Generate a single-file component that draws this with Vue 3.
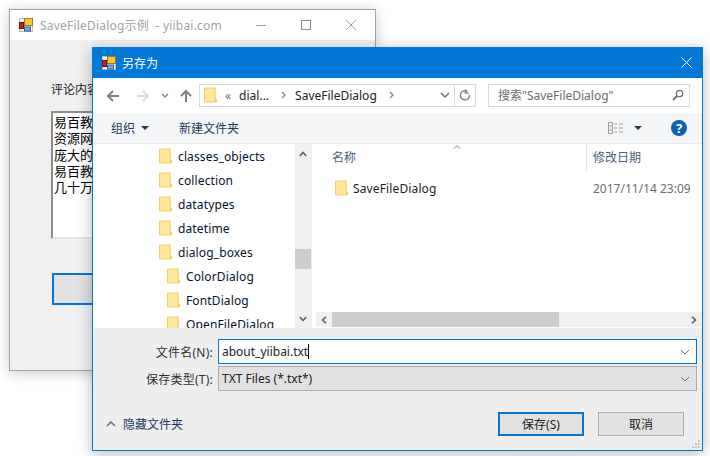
<script setup>
const tree = [
  { name: 'classes_objects', sub: false },
  { name: 'collection', sub: false },
  { name: 'datatypes', sub: false },
  { name: 'datetime', sub: false },
  { name: 'dialog_boxes', sub: false },
  { name: 'ColorDialog', sub: true },
  { name: 'FontDialog', sub: true },
  { name: 'OpenFileDialog', sub: true }
]
const lines = ['易百教程', '资源网站', '庞大的社', '易百教程', '几十万(']
</script>

<template>
  <div class="desk">
    <section class="win back">
      <header class="back-title">
        <svg class="appicon" viewBox="0 0 14 14"><use href="#app-ic" /></svg>
        <span class="back-caption">SaveFileDialog示例&nbsp; - yiibai.com</span>
        <div class="caps">
          <svg viewBox="0 0 46 20"><path d="M0 10.5h10" stroke="#a0a0a0" /></svg>
          <svg viewBox="0 0 46 20"><rect x="0.5" y="5.5" width="9" height="9" fill="none" stroke="#8c8c8c" /></svg>
          <svg viewBox="0 0 46 20"><path d="M0 5l10 10M10 5L0 15" stroke="#a0a0a0" fill="none" /></svg>
        </div>
      </header>
      <div class="back-body">
        <div class="back-label">评论内容：</div>
        <div class="memo"><div v-for="l in lines" :key="l">{{ l }}</div></div>
        <div class="back-btn"></div>
      </div>
    </section>

    <section class="win dlg">
      <header class="dlg-title">
        <svg class="appicon" viewBox="0 0 14 14">
          <defs>
            <g id="app-ic">
              <rect x="0.5" y="0.5" width="13" height="13" fill="#f4f4f4" stroke="#b8b8b8" />
              <rect x="5.5" y="0.5" width="8" height="7" fill="#f8c830" stroke="#a87810" />
              <rect x="0.5" y="4.5" width="4" height="6" fill="#c82020" stroke="#701010" />
              <rect x="5.5" y="9" width="6" height="4" fill="#7fa4e4" stroke="#3060a0" />
            </g>
          </defs>
          <use href="#app-ic" />
        </svg>
        <span class="dlg-caption">另存为</span>
        <svg class="dlg-close" viewBox="0 0 11 11"><path d="M.5.5l10 10M10.5.5l-10 10" stroke="#fff" fill="none" /></svg>
      </header>

      <div class="nav">
        <svg class="nav-ic" viewBox="0 0 14 14"><path d="M13 7H2M7 2L2 7l5 5" stroke="#7f7f7f" stroke-width="2" fill="none" /></svg>
        <svg class="nav-ic gap-fwd" viewBox="0 0 14 14"><path d="M1 7h11M7 2l5 5-5 5" stroke="#dcdcdc" stroke-width="2" fill="none" /></svg>
        <svg class="nav-small" viewBox="0 0 8 6"><path d="M1 1l3 3 3-3" stroke="#8a8a8a" stroke-width="1.5" fill="none" /></svg>
        <svg class="nav-ic gap-up" viewBox="0 0 14 14"><path d="M7 13V2M2 7l5-5 5 5" stroke="#7f7f7f" stroke-width="2" fill="none" /></svg>
        <div class="crumb">
          <svg class="crumb-folder" viewBox="0 0 14 16"><use href="#folder" /></svg>
          <span class="crumb-chev">«</span>
          <span class="crumb-a">dial...</span>
          <svg class="crumb-sep" viewBox="0 0 6 8"><path d="M1 1l3 3-3 3" stroke="#8a8a8a" stroke-width="1.4" fill="none" /></svg>
          <span class="crumb-b">SaveFileDialog</span>
          <svg class="crumb-sep" viewBox="0 0 6 8"><path d="M1 1l3 3-3 3" stroke="#8a8a8a" stroke-width="1.4" fill="none" /></svg>
          <span class="grow"></span>
          <svg class="crumb-drop" viewBox="0 0 10 6"><path d="M1 1l4 4 4-4" stroke="#707070" stroke-width="1.5" fill="none" /></svg>
          <span class="crumb-refresh">
            <svg viewBox="0 0 12 12"><path d="M8.5 2.4A4.6 4.6 0 1 0 10.6 6M6.5 0.5v3.6h3.4" stroke="#7f7f7f" stroke-width="1.4" fill="none" /></svg>
          </span>
        </div>
        <div class="search">
          <span>搜索"SaveFileDialog"</span>
          <svg viewBox="0 0 12 12"><circle cx="7.5" cy="4.5" r="3.2" stroke="#707070" stroke-width="1.3" fill="none" /><path d="M5 7l-4 4" stroke="#707070" stroke-width="1.8" /></svg>
        </div>
      </div>

      <div class="tools">
        <span class="tool-org">组织</span>
        <svg class="tri" viewBox="0 0 8 4"><path d="M0 0h8L4 4z" fill="#1e3a5f" /></svg>
        <span class="tool-new">新建文件夹</span>
        <span class="grow"></span>
        <svg class="view-ic" viewBox="0 0 16 12"><path d="M.5.5h4v11h-4zM.5 4h4M.5 8h4" stroke="#a0a0a0" fill="none" /><path d="M6 2h3M11 2h4M6 6h3M11 6h4M6 10h3M11 10h4" stroke="#a0a0a0" /></svg>
        <svg class="tri view-tri" viewBox="0 0 8 4"><path d="M0 0h8L4 4z" fill="#1e3a5f" /></svg>
        <span class="help">?</span>
      </div>

      <div class="panes">
        <div class="tree">
          <div v-for="t in tree" :key="t.name" class="tree-row" :class="{ sub: t.sub }">
            <svg class="folder" viewBox="0 0 14 16"><use href="#folder" /></svg>
            <span>{{ t.name }}</span>
          </div>
        </div>
        <div class="vbar">
          <svg viewBox="0 0 8 6"><path d="M.8 5L4 1.5 7.2 5" stroke="#606060" stroke-width="1.6" fill="none" /></svg>
          <div class="vtrack"><div class="vthumb"></div></div>
          <svg viewBox="0 0 8 6"><path d="M.8 1L4 4.5 7.2 1" stroke="#606060" stroke-width="1.6" fill="none" /></svg>
        </div>
        <div class="list">
          <div class="list-head">
            <div class="col-name">名称<svg class="sort" viewBox="0 0 8 4"><path d="M.5 4L4 .7 7.5 4" stroke="#8a8a8a" fill="none" /></svg></div>
            <div class="col-date">修改日期</div>
          </div>
          <div class="list-row">
            <svg class="folder" viewBox="0 0 14 16"><use href="#folder" /></svg>
            <span class="row-name">SaveFileDialog</span>
            <span class="row-date">2017/11/14 23:09</span>
          </div>
          <div class="hbar">
            <svg viewBox="0 0 6 8"><path d="M5 .8L1.5 4 5 7.2" stroke="#606060" stroke-width="1.6" fill="none" /></svg>
            <div class="htrack"><div class="hthumb"></div></div>
            <svg viewBox="0 0 6 8"><path d="M1 .8L4.5 4 1 7.2" stroke="#606060" stroke-width="1.6" fill="none" /></svg>
          </div>
        </div>
      </div>

      <div class="form">
        <div class="form-row first">
          <label>文件名(N):</label>
          <div class="field active">
            <span class="value">about_yiibai.txt</span><i class="caret"></i>
            <span class="grow"></span>
            <svg viewBox="0 0 10 6"><path d="M1 1l4 4 4-4" stroke="#707070" fill="none" /></svg>
          </div>
        </div>
        <div class="form-row second">
          <label>保存类型(T):</label>
          <div class="field plain">
            <span class="value">TXT Files (*.txt*)</span>
            <span class="grow"></span>
            <svg viewBox="0 0 10 6"><path d="M1 1l4 4 4-4" stroke="#707070" fill="none" /></svg>
          </div>
        </div>
        <div class="foot">
          <svg class="hide-ic" viewBox="0 0 10 6"><path d="M1 5l4-4 4 4" stroke="#707070" stroke-width="1.6" fill="none" /></svg>
          <span class="hide-text">隐藏文件夹</span>
          <span class="grow"></span>
          <div class="btn primary">保存(S)</div>
          <div class="btn">取消</div>
        </div>
        <svg class="grip" viewBox="0 0 9 9"><path d="M6 0h2v2H6zM3 3h2v2H3zM6 3h2v2H6zM0 6h2v2H0zM3 6h2v2H3zM6 6h2v2H6z" fill="#c4c4c4" /></svg>
      </div>
    </section>

    <svg class="defs" width="0" height="0">
      <defs>
        <g id="folder">
          <path d="M.5.5h11.5v12h1.5v3H.5z" fill="#ffe79c" stroke="#eec94f" />
          <path d="M12 12v3.5" stroke="#eec94f" />
        </g>
      </defs>
    </svg>
  </div>
</template>

<style>
body { margin: 0; background: #fff; }
</style>

<style scoped>
.desk {
  position: relative;
  width: 710px;
  height: 456px;
  overflow: hidden;
  background: #fff;
  font-family: "Noto Sans", "Noto Sans CJK SC", sans-serif;
  font-size: 12px;
  color: #1a1a1a;
}
.defs { position: absolute; }
.grow { flex: 1; }
.win { position: absolute; box-sizing: border-box; display: flex; flex-direction: column; }
.back {
  left: 9px; top: 9px; width: 367px; height: 362px;
  border: 1px solid #a3a3a3;
  background: #f0f0f0;
  box-shadow: 0 2px 12px rgba(0, 0, 0, .22);
}
.back-title {
  height: 30px; background: #fff; display: flex; align-items: center; padding-left: 9px;
}
.appicon { width: 14px; height: 14px; flex: none; }
.back-caption { margin-left: 7px; color: #a2a2a2; font-size: 12px; letter-spacing: .2px; }
.caps { margin-left: auto; display: flex; margin-right: -16px; }
.caps svg { width: 46px; height: 20px; margin-right: -1px; }
.back-body { padding: 42px 0 0 41px; flex: 1; display: flex; flex-direction: column; }
.back-label { height: 19px; line-height: 16px; }
.memo {
  margin-top: 10px; width: 200px; height: 128px; box-sizing: border-box; background: #fff;
  border: 2px solid; border-color: #8c8c8c #e4e4e4 #e4e4e4 #8c8c8c; padding: 1px 0 0 1px;
  line-height: 16.25px; color: #000; font-size: 13px;
}
.back-btn {
  margin-top: 34px; margin-left: 1px; width: 200px; height: 32px; box-sizing: border-box;
  border: 2px solid #0078d7; background: #e1e1e1;
}
.dlg {
  left: 92px; top: 47px; width: 611px; height: 404px;
  border: 1px solid #0078d7;
  background: #eee;
  box-shadow: 0 3px 14px rgba(0, 0, 0, .28);
}
.dlg-title {
  height: 30px; flex: none; background: #0078d7; display: flex; align-items: center; padding-left: 9px; color: #fff;
}
.dlg-caption { margin-left: 6px; font-size: 12px; }
.dlg-close { width: 11px; height: 11px; margin-left: auto; margin-right: 10px; margin-top: -1px; }
.nav {
  height: 35px; flex: none; background: #fff; display: flex; align-items: center; padding-left: 13px;
}
.nav-ic { width: 14px; height: 14px; flex: none; }
.gap-fwd { margin-left: 16px; }
.nav-small { width: 8px; height: 6px; margin-left: 11px; flex: none; }
.gap-up { margin-left: 10px; }
.crumb {
  margin-left: 6px; width: 277px; height: 23px; box-sizing: border-box; border: 1px solid #d9d9d9;
  display: flex; align-items: center; padding-left: 4px; color: #222;
  margin-top: -1px;
}
.crumb-folder { width: 13px; height: 16px; flex: none; }
.crumb-chev { margin-left: 8px; color: #707070; }
.crumb-a { margin-left: 8px; }
.crumb-sep { width: 6px; height: 8px; margin: 0 8px 0 12px; flex: none; }
.crumb-b { margin-left: 0; }
.crumb-drop { width: 10px; height: 6px; margin-right: 4px; flex: none; }
.crumb-refresh {
  width: 20px; height: 21px; border-left: 1px solid #d9d9d9; display: flex; align-items: center; justify-content: center; flex: none;
}
.crumb-refresh svg { width: 12px; height: 12px; }
.search {
  margin-left: 12px; width: 202px; height: 23px; box-sizing: border-box; border: 1px solid #d9d9d9;
  display: flex; align-items: center; padding: 0 5px 0 9px; color: #6d6d6d;
  margin-top: -1px;
}
.search span { flex: 1; }
.search svg { width: 12px; height: 12px; }
.tools {
  height: 31px; flex: none; background: #f4f5f7; display: flex; align-items: center; padding-left: 18px;
  border-bottom: 1px solid #e6e8ea; box-sizing: border-box; color: #1e3a5f;
}
.tri { width: 8px; height: 4px; margin-left: 6px; flex: none; }
.tool-new { margin-left: 30px; }
.view-ic { width: 16px; height: 12px; flex: none; }
.view-tri { margin-left: 10px; }
.help {
  width: 16px; height: 16px; margin: 0 15px 0 29px; border-radius: 50%; background: #0a62b6; color: #fff;
  font-size: 13px; font-weight: 700; line-height: 16px; text-align: center; flex: none;
}
.panes { height: 184px; flex: none; display: flex; background: #fff; overflow: hidden; }
.tree { width: 202px; flex: none; overflow: hidden; color: #04142c; }
.tree-row { height: 24px; display: flex; align-items: center; padding-left: 66px; letter-spacing: .13px; }
.tree-row.sub { padding-left: 74px; }
.tree-row span { margin-left: 6px; }
.folder { width: 13px; height: 16px; flex: none; }
.vbar { width: 17px; flex: none; display: flex; flex-direction: column; align-items: center; background: #f0f0f0; padding: 7px 1px 6px 0; box-sizing: border-box; }
.vbar svg { width: 8px; height: 6px; flex: none; }
.vtrack { flex: 1; width: 100%; position: relative; }
.vthumb { position: absolute; left: 0; right: 0; top: 92px; height: 20px; background: #cdcdcd; }
.list { flex: 1; margin-left: 1px; display: flex; flex-direction: column; min-width: 0; }
.list-head { height: 27px; display: flex; color: #4c607a; flex: none; }
.col-name { width: 274px; padding-left: 19px; box-sizing: border-box; line-height: 28px; position: relative; border-right: 1px solid #e5e5e5; }
.sort { position: absolute; left: 140px; top: 1px; width: 8px; height: 4px; }
.col-date { padding-left: 6px; line-height: 28px; }
.list-row { height: 34px; display: flex; align-items: center; padding-left: 22px; color: #222; }
.row-name { margin-left: 5px; width: 240px; letter-spacing: .13px; }
.row-date { color: #6d6d6d; white-space: nowrap; }
.hbar { margin-top: auto; margin-bottom: 1px; margin-left: 3px; height: 15px; background: #f0f0f0; display: flex; align-items: center; padding: 0 5px 0 5px; flex: none; }
.hbar svg { width: 6px; height: 8px; flex: none; }
.htrack { flex: 1; height: 100%; margin: 0 5px; }
.hthumb { width: 227px; height: 100%; background: #cdcdcd; }
.form { flex: 1; position: relative; display: flex; flex-direction: column; padding: 11px 5px 0 0; }
.form-row { display: flex; align-items: center; height: 25px; }
.form-row.second { margin-top: 2px; }
.form-row label { width: 120px; text-align: right; margin-right: 5px; color: #303030; flex: none; letter-spacing: .25px; }
.field {
  flex: 1; height: 25px; box-sizing: border-box; display: flex; align-items: center; padding: 0 3px; color: #222;
}
.field svg { width: 10px; height: 6px; flex: none; margin-right: 3px; }
.field.active { border: 1px solid #0078d7; background: #fff; }
.field.plain { border: 1px solid #acacac; background: #e1e1e1; }
.caret { width: 1px; height: 15px; background: #000; }
.foot { display: flex; align-items: center; margin-top: 21px; height: 24px; padding-left: 13px; margin-right: 13px; }
.hide-ic { width: 10px; height: 6px; flex: none; }
.hide-text { margin-left: 7px; color: #1e3a5f; }
.btn {
  width: 86px; height: 24px; box-sizing: border-box; border: 1px solid #adadad; background: #e1e1e1;
  display: flex; align-items: center; justify-content: center; margin-left: 14px; color: #222;
}
.btn.primary { border: 2px solid #0078d7; }
.grip { position: absolute; right: 1px; bottom: 1px; width: 9px; height: 9px; }
</style>
